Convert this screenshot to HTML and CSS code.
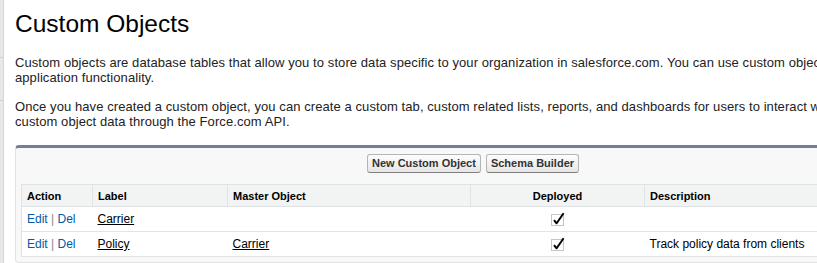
FILE: index.html
```html
<!DOCTYPE html>
<html>
<head>
<meta charset="utf-8">
<title>Custom Objects</title>
<link rel="stylesheet" href="styles.css">
</head>
<body>
<div class="page">
  <aside class="side">
    <div class="side-seg seg1"></div>
    <div class="side-seg seg2"></div>
    <div class="side-seg seg3"></div>
  </aside>
  <main class="main">
    <h1 class="title">Custom Objects</h1>
    <p class="intro">Custom objects are database tables that allow you to store data specific to your organization in salesforce.com. You can use custom objects to extend salesforce.com functionality or to build new<br>application functionality.</p>
    <p class="intro">Once you have created a custom object, you can create a custom tab, custom related lists, reports, and dashboards for users to interact with the custom object data. You can also access<br>custom object data through the Force.com API.</p>

    <section class="block">
      <div class="block-header">
        <div class="block-title"></div>
        <div class="buttons">
          <button class="btn">New Custom Object</button>
          <button class="btn">Schema Builder</button>
        </div>
      </div>
      <table class="list">
        <colgroup>
          <col class="c-action"><col class="c-label"><col class="c-master"><col class="c-dep"><col>
        </colgroup>
        <thead>
          <tr>
            <th>Action</th>
            <th>Label</th>
            <th>Master Object</th>
            <th class="center">Deployed</th>
            <th>Description</th>
          </tr>
        </thead>
        <tbody>
          <tr>
            <td><a class="act" href="#">Edit</a><span class="sep"> | </span><a class="act" href="#">Del</a></td>
            <td><a class="obj" href="#">Carrier</a></td>
            <td></td>
            <td class="center"><svg class="check" width="14" height="14" viewBox="0 0 14 14"><rect x="0.5" y="2.5" width="12" height="11" fill="none" stroke="#8a8a8a" stroke-width="1" stroke-dasharray="1 1"/><path d="M3 8.2 L5.6 11.3 L12.6 1.2" fill="none" stroke="#000" stroke-width="2" stroke-linejoin="round"/></svg></td>
            <td></td>
          </tr>
          <tr>
            <td><a class="act" href="#">Edit</a><span class="sep"> | </span><a class="act" href="#">Del</a></td>
            <td><a class="obj" href="#">Policy</a></td>
            <td><a class="obj" href="#">Carrier</a></td>
            <td class="center"><svg class="check" width="14" height="14" viewBox="0 0 14 14"><rect x="0.5" y="2.5" width="12" height="11" fill="none" stroke="#8a8a8a" stroke-width="1" stroke-dasharray="1 1"/><path d="M3 8.2 L5.6 11.3 L12.6 1.2" fill="none" stroke="#000" stroke-width="2" stroke-linejoin="round"/></svg></td>
            <td>Track policy data from clients</td>
          </tr>
        </tbody>
      </table>
    </section>
  </main>
</div>
</body>
</html>
```

FILE: styles.css
```css
html, body {
  margin: 0;
  padding: 0;
  overflow: hidden;
  background: #fff;
}

body {
  font-family: "Liberation Sans", Arial, Helvetica, sans-serif;
  color: #222;
}

.page {
  display: flex;
  align-items: stretch;
  min-height: 263px;
}

.side {
  width: 3px;
  flex: none;
  display: flex;
  flex-direction: column;
  background: #e8e8e8;
  border-right: 1px solid #d6d6d6;
}

.side-seg {
  border-bottom: 1px solid #d0d0d0;
}

.seg1 { height: 57px; }
.seg2 { height: 42px; }
.seg3 { flex: 1; border-bottom: none; }

.main {
  width: 1200px;
  flex: none;
  padding-left: 11px;
}

.title {
  margin: 9px 0 0;
  font-size: 24.5px;
  line-height: 29px;
  font-weight: normal;
  color: #000;
}

.intro {
  margin: 17px 0 0;
  font-size: 13px;
  line-height: 15px;
  letter-spacing: 0.08px;
  color: #222;
}

.intro + .intro {
  margin-top: 14px;
}

.block {
  margin-top: 16px;
  background: #f8f8f8;
  border: 1px solid #e2e2e2;
  border-top: 3px solid #747e96;
  border-radius: 4px;
  padding: 0 5px 5px;
}

.block-header {
  display: grid;
  grid-template-columns: 346px auto;
  padding-top: 6px;
  height: 18px;
  margin-bottom: 12px;
}

.buttons {
  display: flex;
  gap: 5px;
}

.btn {
  font-family: "Liberation Sans", Arial, Helvetica, sans-serif;
  font-size: 11px;
  font-weight: bold;
  color: #333;
  height: 19px;
  padding: 0 4px;
  line-height: 17px;
  background: linear-gradient(#fdfdfd, #e6e6e6);
  border: 1px solid #b5b5b5;
  border-bottom-color: #7f7f7f;
  border-radius: 3px;
  cursor: pointer;
}

.list {
  width: 100%;
  border-collapse: collapse;
  background: #fff;
  border: 1px solid #e0e3e5;
  font-size: 12px;
}

.c-action { width: 71px; }
.c-label { width: 135px; }
.c-master { width: 243px; }
.c-dep { width: 174px; }

.list th {
  height: 21px;
  padding: 0 5px;
  text-align: left;
  font-size: 11px;
  font-weight: bold;
  color: #000;
  background: #f2f3f3;
  border-left: 1px solid #e0e3e5;
  border-bottom: 1px solid #e0e3e5;
}

.list th:first-child {
  border-left: none;
}

.list td {
  height: 24px;
  padding: 0 5px;
  color: #000;
  border-bottom: 1px solid #e3e3e3;
  vertical-align: middle;
}

.list .center {
  text-align: center;
}

.act {
  color: #015ba7;
  text-decoration: none;
}

.sep {
  color: #8a8a8a;
}

.obj {
  color: #000;
  text-decoration: underline;
}

.check {
  display: inline-block;
  vertical-align: middle;
}
```
